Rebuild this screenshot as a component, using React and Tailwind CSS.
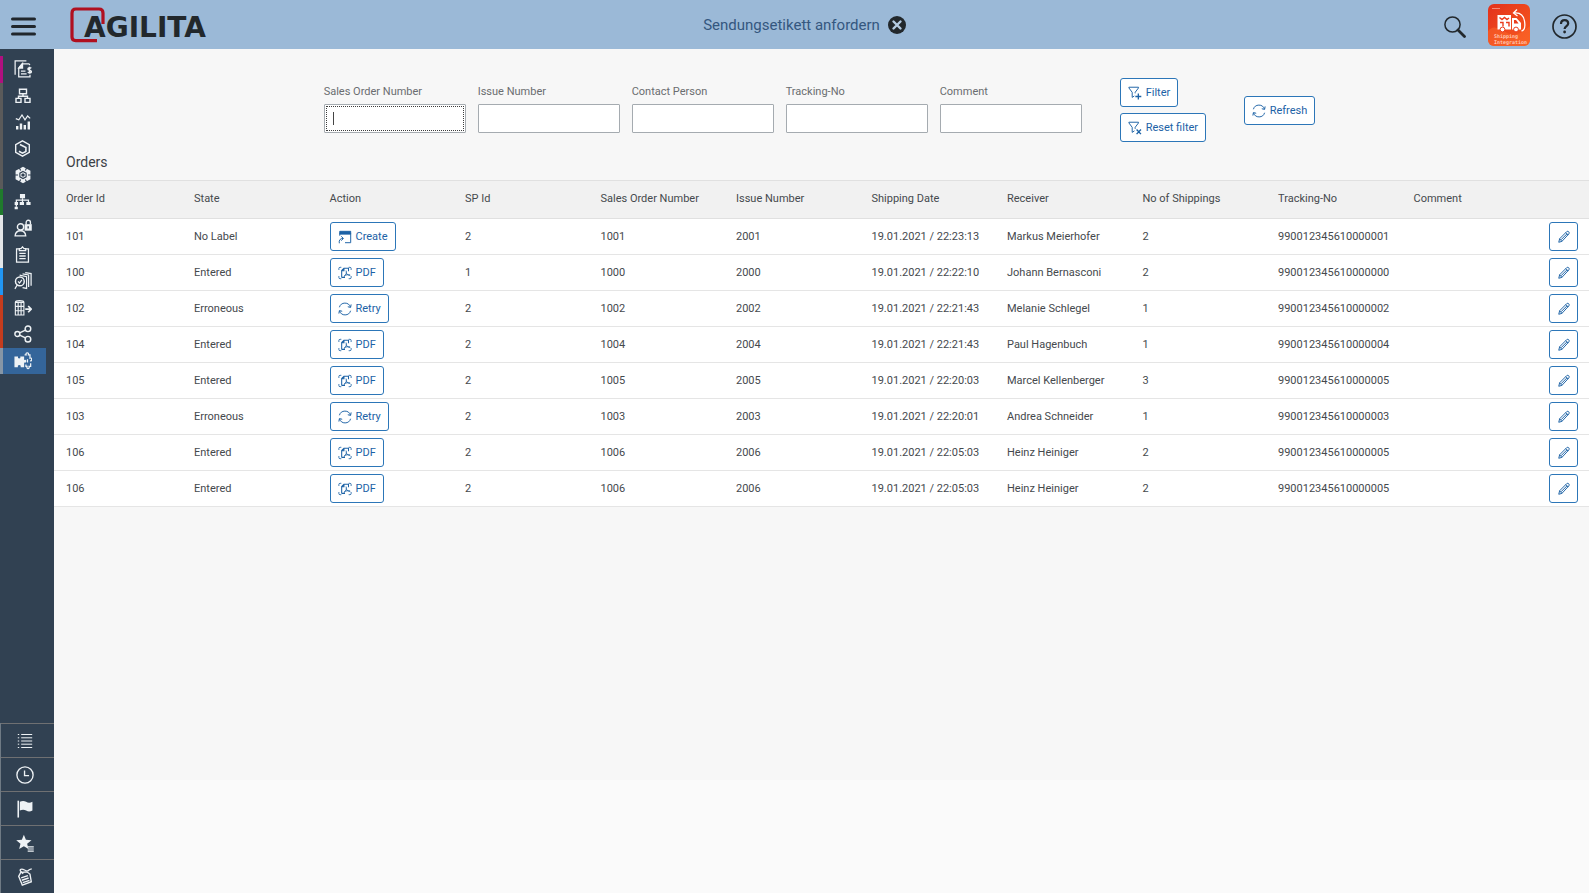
import React from "react";

const orders = [
  { id: "101", state: "No Label", action: "Create", sp: "2", so: "1001", issue: "2001", date: "19.01.2021 / 22:23:13", receiver: "Markus Meierhofer", count: "2", tracking: "990012345610000001" },
  { id: "100", state: "Entered", action: "PDF", sp: "1", so: "1000", issue: "2000", date: "19.01.2021 / 22:22:10", receiver: "Johann Bernasconi", count: "2", tracking: "990012345610000000" },
  { id: "102", state: "Erroneous", action: "Retry", sp: "2", so: "1002", issue: "2002", date: "19.01.2021 / 22:21:43", receiver: "Melanie Schlegel", count: "1", tracking: "990012345610000002" },
  { id: "104", state: "Entered", action: "PDF", sp: "2", so: "1004", issue: "2004", date: "19.01.2021 / 22:21:43", receiver: "Paul Hagenbuch", count: "1", tracking: "990012345610000004" },
  { id: "105", state: "Entered", action: "PDF", sp: "2", so: "1005", issue: "2005", date: "19.01.2021 / 22:20:03", receiver: "Marcel Kellenberger", count: "3", tracking: "990012345610000005" },
  { id: "103", state: "Erroneous", action: "Retry", sp: "2", so: "1003", issue: "2003", date: "19.01.2021 / 22:20:01", receiver: "Andrea Schneider", count: "1", tracking: "990012345610000003" },
  { id: "106", state: "Entered", action: "PDF", sp: "2", so: "1006", issue: "2006", date: "19.01.2021 / 22:05:03", receiver: "Heinz Heiniger", count: "2", tracking: "990012345610000005" },
  { id: "106", state: "Entered", action: "PDF", sp: "2", so: "1006", issue: "2006", date: "19.01.2021 / 22:05:03", receiver: "Heinz Heiniger", count: "2", tracking: "990012345610000005" },
];

const columns = ["Order Id", "State", "Action", "SP Id", "Sales Order Number", "Issue Number", "Shipping Date", "Receiver", "No of Shippings", "Tracking-No", "Comment"];

const filters = ["Sales Order Number", "Issue Number", "Contact Person", "Tracking-No", "Comment"];

const Svg = ({ size = 16, w = 1.2, children }) => (
  <svg width={size} height={size} viewBox="0 0 16 16" fill="none" stroke="currentColor" strokeWidth={w} className="shrink-0" aria-hidden="true">
    {children}
  </svg>
);

/* Action icons */
const RefreshIcon = () => (
  <Svg size={14} w={1.1}>
    <path d="M1.6 6A6.6 6.6 0 0 1 14.2 5.8M14.4 10A6.6 6.6 0 0 1 1.8 10.2" />
    <path d="M15 2.8 14.4 6.2 11.2 5.4M1 13.2l.6-3.4 3.2.8" />
  </Svg>
);
const CreateIcon = () => (
  <Svg size={14} w={1.1}>
    <path d="M2 1.5h12.5v3.2H2z" fill="currentColor" />
    <path d="M2 4v2.5M14.5 4v10.5H8M1.5 15.2C.8 11.5 2.5 9.8 5.8 9.6M3.6 7.2l2.6 2.4-2.4 2.6" />
  </Svg>
);
const PdfIcon = () => (
  <Svg size={14} w={1}>
    <path d="M1 4.5V2.8Q1 1.5 2.4 1.5h1.4M12.2 1.5h1.4Q15 1.5 15 2.8v1.7M1 11.5v1.7q0 1.3 1.4 1.3h1.4M12.2 14.5h1.4q1.4 0 1.4-1.3v-1.7" />
    <path d="M4.2 13V5.2L6.8 2.6H12V6M4.2 13H8M6.8 2.6v2.8H4.2" strokeWidth="1.2" />
    <path d="M9.2 5.2c1 2.4.2 5-2.6 7M9.4 7.4c.6 2 2 3.4 4.6 3.2M7 11.6c2-1.8 4.4-2 6.8-1.2" />
  </Svg>
);
const FilterPlusIcon = () => (
  <Svg size={14} w={1.1}>
    <path d="M8.2 8.4V7.2L12 2.2V1.4H1v.8l3.8 5V13l2.4-1.6" />
    <path d="M11.8 8.6v6.8M8.4 12h6.8" strokeWidth="1.5" />
  </Svg>
);
const FilterResetIcon = () => (
  <Svg size={14} w={1.1}>
    <path d="M8.2 9V7.2L12 2.2V1.4H1v.8l3.8 5V13l2.6-1.8" />
    <path d="m9.8 9.800 5 5.200M14.800 9.800l-5 5.200" strokeWidth="1.6" />
  </Svg>
);
const PencilIcon = () => (
  <Svg size={14} w={1.1}>
    <path d="m2 14 1-4 8.2-8.2q1.2-.8 2.2.2t.2 2.4L5.600 13zM10 3l2.800 2.800M3 10l2.600 3M4.600 11.200 11.400 4.400" />
  </Svg>
);

const actionIcons = { Create: CreateIcon, PDF: PdfIcon, Retry: RefreshIcon };

/* Side navigation */
const navItems = [
  {
    label: "Billing documents",
    strip: "border-[#b0107f]",
    icon: (
      <Svg size={18} w={1.1}>
        <path d="M1 13V.8h10" />
        <path d="M4.2 7V15h10v-1.800M4.200 7l3-3.600h6l1 1M6.200 9.800h4M6.200 12.400h5" />
        <path d="M4.200 7.200 7.600 3v4.200z" fill="currentColor" />
        <path d="M15.4 7.400c-1-.9-3-.6-3 .7 0 1.500 3 .8 3 2.200 0 1.300-2 1.500-3.200.6M13.800 6v6.200" strokeWidth="1.300" />
      </Svg>
    ),
  },
  {
    label: "Organization",
    strip: "border-[#5a5a5a]",
    icon: (
      <Svg>
        <path d="M4.5 1.2h7v4.6h-7zM1 10.4h5v4H1zM10 10.4h5v4h-5zM8 5.8v2.4M3.500 10.400V8.200h9v2.200" strokeWidth="1.4" />
      </Svg>
    ),
  },
  {
    label: "Analytics",
    strip: "border-[#5a5a5a]",
    icon: (
      <Svg>
        <path d="m.8 4.600 3 1.200L7 1l3 4.800L12.600 2l2.600 2.400" />
        <path d="M2.200 15.500v-3.600M6 15.500V9.600M9.800 15.500v-4.400M13.800 15.500V7.400" strokeWidth="2.4" />
      </Svg>
    ),
  },
  {
    label: "Products",
    strip: "border-[#5a5a5a]",
    icon: (
      <Svg size={17}>
        <path d="m8 .8 6.400 3.600v7.200L8 15.200l-6.400-3.600V4.400z" strokeWidth="1.3" />
        <path d="M5.600 4.200 11.200 7v4.200M4.600 10.600 8 12.400l3.200-1.600" strokeWidth="1.500" />
      </Svg>
    ),
  },
  {
    label: "Components",
    strip: "border-[#5a5a5a]",
    icon: (
      <Svg size={18}>
        <path d="m8 .6 6.600 3.700v7.400L8 15.400l-6.600-3.700V4.300z" fill="currentColor" stroke="none" />
        <path d="m8 4.800 2.800 1.600v3.200L8 11.200 5.200 9.600V6.400z" stroke="#314152" strokeWidth="1" />
        <path d="m8 6.500 1.400.8v1.500L8 9.600l-1.400-.8V7.300z" fill="#314152" stroke="none" />
        <path d="M4.800 1.800 5.900 4M11.200 1.800 10.100 4M4.800 14.200 5.900 12M11.200 14.200 10.100 12M1 8h2.600M15 8h-2.600" stroke="#314152" strokeWidth="1" />
      </Svg>
    ),
  },
  {
    label: "Hierarchy",
    strip: "border-[#1f7a2c]",
    icon: (
      <Svg size={17}>
        <path d="M5.600 1h4.800v4H5.600zM5.400 8.400h4v3h-4zM11.600 8.400h4v3h-4zM.6 8.400h3.200v3H.6zM.6 13h3v2.400h-3z" fill="currentColor" stroke="none" />
        <path d="M8 5v4M2.200 13V6.800h11.400V9" />
      </Svg>
    ),
  },
  {
    label: "User access",
    strip: "border-[#e4e6e8]",
    icon: (
      <Svg size={18}>
        <circle cx="5.8" cy="7" r="2.8" />
        <path d="M1 15c.2-3 2-4.600 4.800-4.600s4.400 1.600 4.600 4.600zM10.800 4.800V3a1.900 1.900 0 0 1 3.800 0v1.800" />
        <path d="M9.400 4.600h6.400v5.800H9.400z" fill="currentColor" stroke="none" />
        <path d="M12.600 6.400v2" stroke="#314152" />
      </Svg>
    ),
  },
  {
    label: "Tasks",
    strip: "border-[#e4e6e8]",
    icon: (
      <Svg size={17}>
        <path d="M5 2.600H2.400v12.600h11.200V2.600H11M5 4.400V2.400h1.600L8 .8l1.400 1.600H11v2z" />
        <path d="M5 7h6M5 9.400h6M5 11.800h6" />
      </Svg>
    ),
  },
  {
    label: "Document search",
    strip: "border-[#2196f3]",
    icon: (
      <Svg size={18} w={1.1}>
        <circle cx="5.200" cy="8.400" r="3.900" strokeWidth="1.300" />
        <path d="m3.600 8.400 1.300 1.400L7 7M2.800 11.600.8 15M5 2.800l6.200 1.400v10.400l-3.600-.8M7.600 1.600l5.400 1v10.800M10 .6l5.200.8v10.800" />
      </Svg>
    ),
  },
  {
    label: "Outbound delivery",
    strip: "border-[#c43c1e]",
    icon: (
      <Svg size={18} w={1}>
        <path d="M1.200 3v11.200h7.600V3M1.200 3q0-1.600 3.800-1.600T8.800 3zM1.200 6.600h7.600M1.200 10.400h7.600M3.700 3v11M6.300 3v11" />
        <path d="M10 9h5.200M12.600 6.200 15.300 9l-2.700 2.800" strokeWidth="1.5" />
      </Svg>
    ),
  },
  {
    label: "Share",
    strip: "border-[#c43c1e]",
    icon: (
      <Svg size={18} w={1.3}>
        <circle cx="3" cy="8" r="2.200" />
        <circle cx="12.400" cy="3.400" r="2.500" />
        <circle cx="12.400" cy="12.600" r="2.500" />
        <path d="m5 7 5.200-2.500M5 9l5.200 2.500" />
      </Svg>
    ),
  },
  {
    label: "Shipping integration",
    strip: "border-[#8696a6]",
    active: true,
    icon: (
      <Svg size={18} w={1.1}>
        <path d="M.4 4h3.200q-.6 1.800 1 1.800T5.600 4H9v3q2-.5 2 1.200T9 9.400v4.200H6q.4-2-1.300-2t-1.300 2h-3z" fill="currentColor" stroke="none" />
        <path d="M9.400 2.600h1.400q-.4-1.900 1-1.900t1 1.900h1.400v2.800q1.500-.4 1.500 1.200t-1.500 1.200M10.600 11v1.800h1q-.4 2 .9 2t.9-2h1.400V10M12 6.400v3" />
      </Svg>
    ),
  },
];

const footerItems = [
  {
    label: "List",
    icon: (
      <Svg w={1}>
        <path d="M.8 1.500h1.400M.8 4.800h1.400M.8 8h1.400M.8 11.200h1.400M.8 14.500h1.400M4.200 1.500h11M4.200 4.800h11M4.200 8h11M4.200 11.200h11M4.200 14.500h11" />
      </Svg>
    ),
  },
  {
    label: "Recent",
    icon: (
      <Svg size={18}>
        <circle cx="8" cy="8" r="7.200" />
        <path d="M7.600 4v4.500h4" />
      </Svg>
    ),
  },
  {
    label: "Flag",
    icon: (
      <Svg size={18}>
        <path d="M2 .6v15" strokeWidth="1.4" />
        <path d="M3.400 1.600q3-1.600 5.600 0t5.600 0v7.800q-3 1.500-5.600 0t-5.600 0z" fill="currentColor" stroke="none" />
      </Svg>
    ),
  },
  {
    label: "Favorites",
    icon: (
      <Svg size={18} w={1}>
        <path d="m7 .6 1.800 4.600 5 .3-3.900 3.100 1.200 4.800L7 10.800l-4.200 2.600L4 8.600.2 5.500l5-.3z" fill="currentColor" stroke="none" />
        <path d="M10.400 11.400h5.400M10.400 13.300h5.400M10.400 15.200h5.400" />
      </Svg>
    ),
  },
  {
    label: "Tags",
    icon: (
      <Svg size={18}>
        <path d="M2.400 7.400 4.200 4l5.400-.6 2.800 2 1.200 6.800-8 3z" />
        <path d="m4.600 8.800 6-2M5.200 10.900l6-2M6 13l6-2" strokeWidth="1.300" />
        <path d="M6.400 5.200Q3 2.400 4 1.400t3.600.4 3.400.4 3-1.400" />
      </Svg>
    ),
  },
];

const Logo = () => (
  <div className="relative h-9 w-[144px]">
    <svg width="36" height="36" viewBox="0 0 36 36" fill="none" stroke="#b01020" strokeWidth="3.2" className="absolute left-0 top-0" aria-hidden="true">
      <path d="M33 17V6q0-4-4-4H5.800Q2 2 2 6v24q0 3.600 3.800 3.600H27" />
    </svg>
    <span className="absolute left-[14px] top-[14px] font-['DejaVu_Sans',sans-serif] text-[28px] leading-[14px] font-bold text-[#22282c]">AGILITA</span>
  </div>
);

const AppTile = () => (
  <button type="button" aria-label="Shipping Integration" className="relative h-[42px] w-[42px] overflow-hidden rounded-md bg-gradient-to-br from-[#e2301c] to-[#fa5a1e]">
    <svg width="42" height="42" viewBox="0 0 42 42" fill="none" className="absolute inset-0" aria-hidden="true">
      <path d="M0 27Q4 22 9 24t12 6 21-8v20H0z" fill="#fb6a2c" opacity=".5" />
      <path d="M4 4.500h8" stroke="#f58a78" />
      <path d="M9.500 11H23v14.500H9.500zM24 14h4.500l4.500 5v6.500h-9z" fill="#fff" />
      <path d="M26 16h2l2.600 3.500H26z" fill="#ea3c1e" />
      <path d="m11.500 13.500 2.500 2 2.500-2 2.500 2 2-1.500M12 18.500h3v4M18 18.500h3v4" stroke="#ea3c1e" strokeWidth="1.400" />
      <circle cx="14.500" cy="25.500" r="2.400" fill="#fff" stroke="#ea3c1e" />
      <circle cx="28" cy="25.500" r="2.400" fill="#fff" stroke="#ea3c1e" />
      <path d="M26 9q9-1 10.500 8t-3 10M29 5.500 25.500 9l4 3" stroke="#fff" strokeWidth="1.300" />
    </svg>
    <span className="absolute left-1.5 top-[29px] text-left font-['DejaVu_Sans_Mono',monospace] text-[5px] leading-[6px] font-bold text-[#ffc4b0]">
      Shipping
      <br />
      Integration
    </span>
  </button>
);

const ActionButton = ({ icon, children }) => (
  <button type="button" className="inline-flex h-[29px] items-center gap-1 rounded-[3px] border border-[#2c76b8] bg-white px-[7px] pt-px text-[11px] whitespace-nowrap text-[#1c62a6]">
    {icon}
    {children}
  </button>
);

const Header = () => (
  <header className="grid h-[49px] grid-cols-[1fr_auto_1fr] items-center bg-[#9bb9d7]">
    <div className="flex items-center gap-[34px] pl-[11px]">
      <button type="button" aria-label="Menu" className="text-[#20262c]">
        <svg width="25" height="20" viewBox="0 0 25 20" stroke="currentColor" strokeWidth="3" strokeLinecap="round" className="mt-1" aria-hidden="true">
          <path d="M1.500 2h22M1.500 9.500h22M1.500 17h22" />
        </svg>
      </button>
      <Logo />
    </div>
    <div className="flex items-center gap-2 pl-5">
      <h1 className="pt-0.5 text-[15px] text-[#34577f]">Sendungsetikett anfordern</h1>
      <button type="button" aria-label="Close">
        <svg width="18" height="18" viewBox="0 0 18 18" aria-hidden="true">
          <circle cx="9" cy="9" r="9" fill="#22282c" />
          <path d="m5.500 5.500 7 7M12.500 5.500l-7 7" stroke="#b4cce2" strokeWidth="2.400" strokeLinecap="round" />
        </svg>
      </button>
    </div>
    <div className="flex items-center justify-end gap-[22px] pr-3">
      <button type="button" aria-label="Search" className="pt-1 text-[#22282c]">
        <svg width="22" height="22" viewBox="0 0 22 22" fill="none" stroke="currentColor" aria-hidden="true">
          <circle cx="8.500" cy="8.500" r="7.600" strokeWidth="1.500" />
          <path d="m14 14 6.500 6.500" strokeWidth="2.800" strokeLinecap="round" />
        </svg>
      </button>
      <AppTile />
      <button type="button" aria-label="Help" className="pt-1 text-[#22282c]">
        <svg width="25" height="25" viewBox="0 0 25 25" fill="none" stroke="currentColor" strokeWidth="1.700" aria-hidden="true">
          <circle cx="12.500" cy="12.500" r="11.500" />
          <path d="M9 10q0-3.800 3.600-3.800T16.200 9.600c0 2.400-3.600 2.600-3.600 5.400" strokeWidth="2.200" />
          <circle cx="12.600" cy="18" r="1.400" fill="currentColor" stroke="none" />
        </svg>
      </button>
    </div>
  </header>
);

const Sidebar = () => (
  <aside className="flex w-[54px] shrink-0 flex-col justify-between bg-[#314152] text-[#eef2f5]">
    <nav className="mt-[7px] grid h-[318px] grid-rows-12">
      {navItems.map((item) => (
        <div key={item.label} className={`flex border-l-[3px] ${item.strip}`}>
          <a href="#" aria-label={item.label} className={`flex w-[43px] items-center justify-center pr-1 ${item.active ? "bg-[#34659a]" : ""}`}>
            {item.icon}
          </a>
        </div>
      ))}
    </nav>
    <nav className="flex flex-col border-l border-[#6f7a84]">
      {footerItems.map((item) => (
        <a key={item.label} href="#" aria-label={item.label} className="flex h-[34px] items-center justify-center border-t border-[#6f7072] pr-1.5">
          {item.icon}
        </a>
      ))}
    </nav>
  </aside>
);

const FilterBar = () => (
  <form className="flex items-start justify-center pt-[29px] pr-1">
    <div className="flex gap-3 pt-1.5">
      {filters.map((label, i) => (
        <div key={label} className="relative flex w-[142px] flex-col gap-1">
          <label htmlFor={`filter-${i}`} className="leading-4 text-[#6a6d70]">
            {label}
          </label>
          <input
            id={`filter-${i}`}
            type="text"
            className={`h-[29px] w-full rounded-[1px] border border-[#a5abb0] bg-white px-2 ${i === 0 ? "outline-1 -outline-offset-3 outline-dotted outline-[#3c3c3c]" : "outline-none"}`}
          />
          {i === 0 && <span className="absolute bottom-2 left-[9px] h-[13px] w-px bg-[#444]" />}
        </div>
      ))}
    </div>
    <div className="ml-[38px] flex w-[86px] flex-col items-start gap-1.5">
      <ActionButton icon={<FilterPlusIcon />}>Filter</ActionButton>
      <ActionButton icon={<FilterResetIcon />}>Reset filter</ActionButton>
    </div>
    <div className="ml-[38px] pt-[18px]">
      <ActionButton icon={<RefreshIcon />}>Refresh</ActionButton>
    </div>
  </form>
);

const OrdersTable = () => (
  <table className="w-full table-fixed border-separate border-spacing-0 text-left text-[#45494d]">
    <thead>
      <tr className="h-[39px] bg-[#f1f1f1]">
        {columns.map((col, i) => (
          <th key={col} scope="col" className={`border-y border-[#e0e0e0] font-normal whitespace-nowrap ${i === 0 ? "w-[132px] pl-3" : "pl-2"}`}>
            {col}
          </th>
        ))}
        <th className="w-12 border-y border-[#e0e0e0]" aria-label="Edit" />
      </tr>
    </thead>
    <tbody>
      {orders.map((order, i) => {
        const Icon = actionIcons[order.action];
        return (
          <tr key={i} className="h-9 bg-white *:border-b *:border-[#e5e5e5] *:p-0 *:pt-0.5 *:pl-2 *:whitespace-nowrap">
            <td className="pl-3!">{order.id}</td>
            <td>{order.state}</td>
            <td className="pt-0!">
              <div className="flex">
                <ActionButton icon={<Icon />}>{order.action}</ActionButton>
              </div>
            </td>
            <td>{order.sp}</td>
            <td>{order.so}</td>
            <td>{order.issue}</td>
            <td>{order.date}</td>
            <td>{order.receiver}</td>
            <td>{order.count}</td>
            <td>{order.tracking}</td>
            <td />
            <td className="pt-0!">
              <button type="button" aria-label={`Edit order ${order.id}`} className="flex h-[29px] w-[29px] items-center justify-center rounded-[3px] border border-[#2c76b8] bg-white text-[#1c62a6]">
                <PencilIcon />
              </button>
            </td>
          </tr>
        );
      })}
    </tbody>
  </table>
);

export default function App() {
  return (
    <div className="flex min-h-screen flex-col bg-[#f7f7f7] font-[Roboto,sans-serif] text-[11px]">
      <Header />
      <div className="flex flex-1">
        <Sidebar />
        <main className="flex min-w-0 flex-1 flex-col">
          <section className="flex-1">
            <FilterBar />
            <h2 className="flex h-[38px] items-center pt-0.5 pl-3 text-[14px] text-[#3c4146]">Orders</h2>
            <OrdersTable />
          </section>
          <div className="h-[113px] bg-[#fafafa]" />
        </main>
      </div>
    </div>
  );
}
